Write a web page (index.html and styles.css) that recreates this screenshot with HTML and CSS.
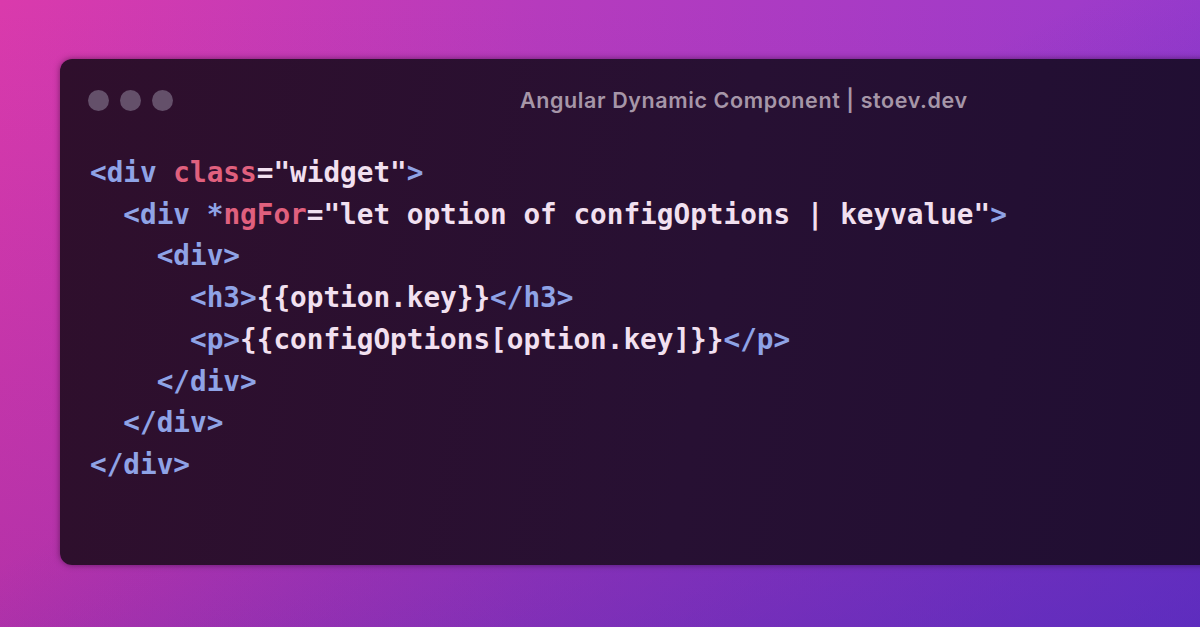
FILE: index.html
```html
<!DOCTYPE html>
<html lang="en">
<head>
<meta charset="utf-8">
<title>Angular Dynamic Component | stoev.dev</title>
<link rel="stylesheet" href="styles.css">
</head>
<body>
<div class="stage">
  <div class="window">
    <div class="titlebar">
      <div class="dots">
        <span class="dot"></span>
        <span class="dot"></span>
        <span class="dot"></span>
      </div>
      <div class="title">Angular Dynamic Component | stoev.dev</div>
    </div>
    <pre class="code"><code><span class="t">&lt;div</span> <span class="a">class</span><span class="s">="widget"</span><span class="t">&gt;</span>
  <span class="t">&lt;div *</span><span class="a">ngFor</span><span class="s">="let option of configOptions | keyvalue"</span><span class="t">&gt;</span>
    <span class="t">&lt;div&gt;</span>
      <span class="t">&lt;h3&gt;</span><span class="s">{{option.key}}</span><span class="t">&lt;/h3&gt;</span>
      <span class="t">&lt;p&gt;</span><span class="s">{{configOptions[option.key]}}</span><span class="t">&lt;/p&gt;</span>
    <span class="t">&lt;/div&gt;</span>
  <span class="t">&lt;/div&gt;</span>
<span class="t">&lt;/div&gt;</span></code></pre>
  </div>
</div>
</body>
</html>
```
FILE: styles.css
```css
html, body {
  margin: 0;
  padding: 0;
  width: 1200px;
  height: 627px;
  overflow: hidden;
}
body {
  background:
    linear-gradient(to bottom right, rgba(60, 40, 190, 0) 45%, rgba(60, 40, 190, 0.55) 100%),
    linear-gradient(to bottom, rgba(90, 30, 160, 0) 0%, rgba(90, 30, 160, 0.3) 100%),
    linear-gradient(to right, #da3aac 0%, #b63bbd 45%, #9a3bcc 100%);
}
.stage {
  padding: 59px 0 0 60px;
}
.window {
  width: 1180px;
  height: 506px;
  border-radius: 12px 0 0 12px;
  background: linear-gradient(100deg, #2f0f2c 0%, #271033 55%, #1f0e33 100%);
  box-shadow: 0 0 6px rgba(30, 0, 30, 0.5);
  box-sizing: border-box;
}
.titlebar {
  height: 82px;
  display: flex;
  align-items: center;
  padding-left: 28px;
}
.dots {
  display: flex;
  gap: 11px;
}
.dot {
  width: 21px;
  height: 21px;
  border-radius: 50%;
  background: #64506a;
}
.title {
  margin-left: 347px;
  font-family: Inter, "Open Sans", sans-serif;
  font-weight: 600;
  font-size: 21.5px;
  letter-spacing: 0.6px;
  color: #a696a8;
}
.code {
  margin: 0;
  padding: 11px 0 0 30px;
  font-family: "DejaVu Sans Mono", monospace;
  font-size: 27.7px;
  line-height: 41.7px;
  font-weight: bold;
  color: #f2e0f0;
}
.t { color: #8fa3e6; }
.a { color: #e0607e; }
.s { color: #f2e0f0; }
```
